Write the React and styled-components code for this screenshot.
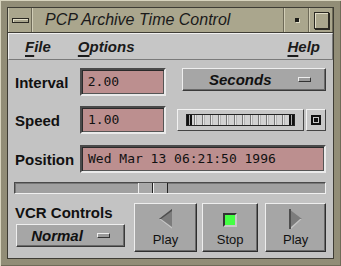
import styled, { createGlobalStyle } from "styled-components";

const GlobalStyle = createGlobalStyle`
  html, body {
    margin: 0;
    padding: 0;
    overflow: hidden;
    background: #b4af97;
  }
`;

const App = () => {
  return (
    <>
      <GlobalStyle />
      <Frame>
        <Window>
          <TitleBar>
            <TitleButton $w={24}>
              <MinusBar />
            </TitleButton>
            <TitleText>PCP Archive Time Control</TitleText>
            <TitleButton $w={25}>
              <Dot />
            </TitleButton>
            <TitleButton $w={24}>
              <MaxBox />
            </TitleButton>
          </TitleBar>

          <MenuBar>
            <MenuItem>
              <u>F</u>ile
            </MenuItem>
            <MenuItem>
              <u>O</u>ptions
            </MenuItem>
            <MenuSpacer />
            <MenuItem>
              <u>H</u>elp
            </MenuItem>
          </MenuBar>

          <Content>
            <FieldRow $mb={10}>
              <Label>Interval</Label>
              <TextField $w={86}>2.00</TextField>
              <OptionButton $w={145} $ml={16}>
                <OptionText>Seconds</OptionText>
                <Indicator />
              </OptionButton>
            </FieldRow>

            <FieldRow $mb={11}>
              <Label>Speed</Label>
              <TextField $w={86}>1.00</TextField>
              <Slider>
                <Track />
              </Slider>
              <SquareButton>
                <SquareIcon />
              </SquareButton>
            </FieldRow>

            <FieldRow $mb={9}>
              <Label>Position</Label>
              <TextField $w={246}>Wed Mar 13 06:21:50 1996</TextField>
            </FieldRow>

            <ScrollBar>
              <Thumb />
              <Thumb />
            </ScrollBar>

            <BottomRow>
              <VcrBox>
                <VcrLabel>VCR Controls</VcrLabel>
                <OptionButton $w={109} $ml={1}>
                  <OptionText>Normal</OptionText>
                  <Indicator />
                </OptionButton>
              </VcrBox>

              <TransportButton $w={63} $ml={9}>
                <svg width="14" height="20" viewBox="0 0 14 20">
                  <polygon points="13,0 13,20 0,10" fill="#7c7c7c" />
                  <polygon points="13,0 0,10 2,10 13,2" fill="#4e4e4e" />
                  <polygon points="13,20 0,10 2,10 13,18" fill="#c4c4c4" />
                </svg>
                <ButtonText>Play</ButtonText>
              </TransportButton>

              <TransportButton $w={57} $ml={5}>
                <StopLight />
                <ButtonText>Stop</ButtonText>
              </TransportButton>

              <TransportButton $w={61} $ml={7}>
                <svg width="14" height="20" viewBox="0 0 14 20">
                  <polygon points="0,0 0,20 13,10" fill="#7c7c7c" />
                  <rect x="0" y="0" width="2" height="20" fill="#4e4e4e" />
                  <polygon points="2,18 2,20 13,10 11,10" fill="#c4c4c4" />
                </svg>
                <ButtonText>Play</ButtonText>
              </TransportButton>
            </BottomRow>
          </Content>
        </Window>
      </Frame>
    </>
  );
};

export default App;

const Frame = styled.div`
  width: 341px;
  height: 266px;
  box-sizing: border-box;
  padding: 7px 7px 7px 7px;
  background-color: #b4af97;
  background-image: radial-gradient(#8f8b74 0.7px, transparent 0.8px);
  background-size: 2px 2px;
  box-shadow: inset 1px 1px 0 #d8d4be, inset -1px -1px 0 #6f6b58;
`;

const Window = styled.div`
  width: 327px;
  height: 252px;
  box-sizing: border-box;
  border: 1px solid #3e3c34;
  display: flex;
  flex-direction: column;
  background: #c3c3c3;
`;

const TitleBar = styled.div`
  height: 24px;
  display: flex;
  align-items: stretch;
  background: #aaa68d;
  border-bottom: 1px solid #3e3c34;
`;

const TitleButton = styled.div`
  width: ${(p) => p.$w}px;
  box-sizing: border-box;
  display: flex;
  align-items: center;
  justify-content: center;
  border-left: 1px solid #d2ceb7;
  border-right: 1px solid #6e6a58;
  background: #aaa68d;
`;

const MinusBar = styled.div`
  width: 15px;
  height: 3px;
  background: #aaa68d;
  border: 1px solid #2a2822;
  box-shadow: inset 1px 1px 0 #e2dec8;
`;

const Dot = styled.div`
  width: 4px;
  height: 4px;
  background: #1e1e1a;
  box-shadow: 1px 1px 0 #e0dcc6;
`;

const MaxBox = styled.div`
  width: 13px;
  height: 15px;
  border: 1px solid #2a2822;
  background: #aaa68d;
  box-shadow: 1px 1px 0 #2a2822, inset 1px 1px 0 #e2dec8;
`;

const TitleText = styled.div`
  flex: 1;
  padding-left: 12px;
  font-family: "Liberation Sans", Arial, sans-serif;
  font-style: italic;
  font-size: 16px;
  line-height: 23px;
  color: #1a1a1a;
  border-left: 1px solid #d2ceb7;
  border-right: 1px solid #6e6a58;
`;

const MenuBar = styled.div`
  height: 27px;
  box-sizing: border-box;
  display: flex;
  align-items: center;
  padding: 0 12px 0 16px;
  background: #c6c6c6;
  border-top: 1px solid #f0f0f0;
  border-left: 1px solid #f0f0f0;
  border-bottom: 1px solid #7a7a7a;
  border-right: 1px solid #7a7a7a;
`;

const MenuItem = styled.div`
  font-family: "Liberation Sans", Arial, sans-serif;
  font-style: italic;
  font-weight: bold;
  font-size: 15px;
  color: #1a1a1a;
  margin-right: 27px;

  &:last-child {
    margin-right: 0;
  }

  u {
    text-decoration-thickness: 2px;
    text-underline-offset: 3px;
  }
`;

const MenuSpacer = styled.div`
  flex: 1;
`;

const Content = styled.div`
  flex: 1;
  padding: 8px 7px 0 7px;
  display: flex;
  flex-direction: column;
`;

const FieldRow = styled.div`
  display: flex;
  align-items: center;
  height: 28px;
  margin-bottom: ${(p) => p.$mb}px;
`;

const Label = styled.div`
  width: 65px;
  font-family: "Liberation Sans", Arial, sans-serif;
  font-weight: bold;
  font-size: 15px;
  color: #111;
`;

const TextField = styled.div`
  width: ${(p) => p.$w}px;
  height: 28px;
  box-sizing: border-box;
  background: #bc8f8f;
  border: 2px solid;
  border-color: #4a4a4a #eaeaea #eaeaea #4a4a4a;
  box-shadow: inset 1px 1px 0 #2a2a2a, inset -1px -1px 0 #555;
  padding: 0 6px;
  font-family: "DejaVu Sans Mono", "Liberation Mono", monospace;
  font-size: 13px;
  line-height: 24px;
  color: #111;
  white-space: nowrap;
`;

const OptionButton = styled.div`
  width: ${(p) => p.$w}px;
  height: 23px;
  margin-left: ${(p) => p.$ml}px;
  align-self: flex-start;
  box-sizing: border-box;
  display: flex;
  align-items: center;
  background: #a6a6a6;
  border: 1px solid;
  border-color: #eeeeee #3a3a3a #3a3a3a #eeeeee;
  box-shadow: inset -1px -1px 0 #6a6a6a;
`;

const OptionText = styled.div`
  flex: 1;
  text-align: center;
  font-family: "Liberation Sans", Arial, sans-serif;
  font-style: italic;
  font-weight: bold;
  font-size: 15px;
  color: #111;
`;

const Indicator = styled.div`
  width: 11px;
  height: 3px;
  margin-right: 14px;
  background: #9a9a9a;
  border: 1px solid;
  border-color: #eeeeee #333 #333 #eeeeee;
`;

const Slider = styled.div`
  width: 127px;
  height: 22px;
  margin-left: 11px;
  box-sizing: border-box;
  display: flex;
  align-items: center;
  justify-content: center;
  background: #c8c8c8;
  border: 1px solid;
  border-color: #f2f2f2 #444 #444 #f2f2f2;
`;

const Track = styled.div`
  width: 109px;
  height: 12px;
  box-sizing: border-box;
  border: 1px solid #222;
  background:
    linear-gradient(90deg, #111 0 2px, #aaa 2px 3px, #111 3px 5px, transparent 5px),
    linear-gradient(270deg, #111 0 2px, #aaa 2px 3px, #111 3px 5px, transparent 5px),
    repeating-linear-gradient(90deg, #e6e6e6 0 1px, #b4b4b4 1px 2px, #d2d2d2 2px 7px, #777 7px 8px);
`;

const SquareButton = styled.div`
  width: 20px;
  height: 22px;
  margin-left: 2px;
  box-sizing: border-box;
  display: flex;
  align-items: center;
  justify-content: center;
  background: #c8c8c8;
  border: 1px solid;
  border-color: #f2f2f2 #444 #444 #f2f2f2;
`;

const SquareIcon = styled.div`
  width: 6px;
  height: 6px;
  border: 2px solid #111;
  background: #c8c8c8;
  box-shadow: inset 0 0 0 1px #c8c8c8, inset 0 0 0 3px #111;
`;

const ScrollBar = styled.div`
  width: 312px;
  height: 12px;
  margin-left: -1px;
  box-sizing: border-box;
  display: flex;
  padding-left: 123px;
  background: #a0a0a0;
  border: 1px solid;
  border-color: #4a4a4a #f0f0f0 #f0f0f0 #4a4a4a;
  box-shadow: inset 1px 1px 0 #777;
`;

const Thumb = styled.div`
  width: 15px;
  height: 100%;
  box-sizing: border-box;
  background: #a8a8a8;
  border-left: 1px solid #eee;
  border-right: 1px solid #222;
`;

const BottomRow = styled.div`
  display: flex;
  margin-top: 9px;
  align-items: flex-start;
`;

const VcrBox = styled.div`
  width: 111px;
  display: flex;
  flex-direction: column;
`;

const VcrLabel = styled.div`
  font-family: "Liberation Sans", Arial, sans-serif;
  font-weight: bold;
  font-size: 15px;
  color: #111;
  margin-top: 1px;
  margin-bottom: 3px;
  line-height: 17px;
`;

const TransportButton = styled.div`
  width: ${(p) => p.$w}px;
  height: 49px;
  margin-left: ${(p) => p.$ml}px;
  box-sizing: border-box;
  display: flex;
  flex-direction: column;
  align-items: center;
  justify-content: flex-end;
  padding-bottom: 4px;
  gap: 3px;
  background: #a6a6a6;
  border: 1px solid;
  border-color: #eeeeee #2e2e2e #2e2e2e #eeeeee;
  box-shadow: inset -1px -1px 0 #6a6a6a;
`;

const StopLight = styled.div`
  width: 14px;
  height: 14px;
  margin-bottom: 2px;
  box-sizing: border-box;
  background: #44ff44;
  border: 2px solid;
  border-color: #333 #c8c8c8 #c8c8c8 #333;
`;

const ButtonText = styled.div`
  font-family: "Liberation Sans", Arial, sans-serif;
  font-size: 13px;
  color: #111;
  line-height: 15px;
`;
